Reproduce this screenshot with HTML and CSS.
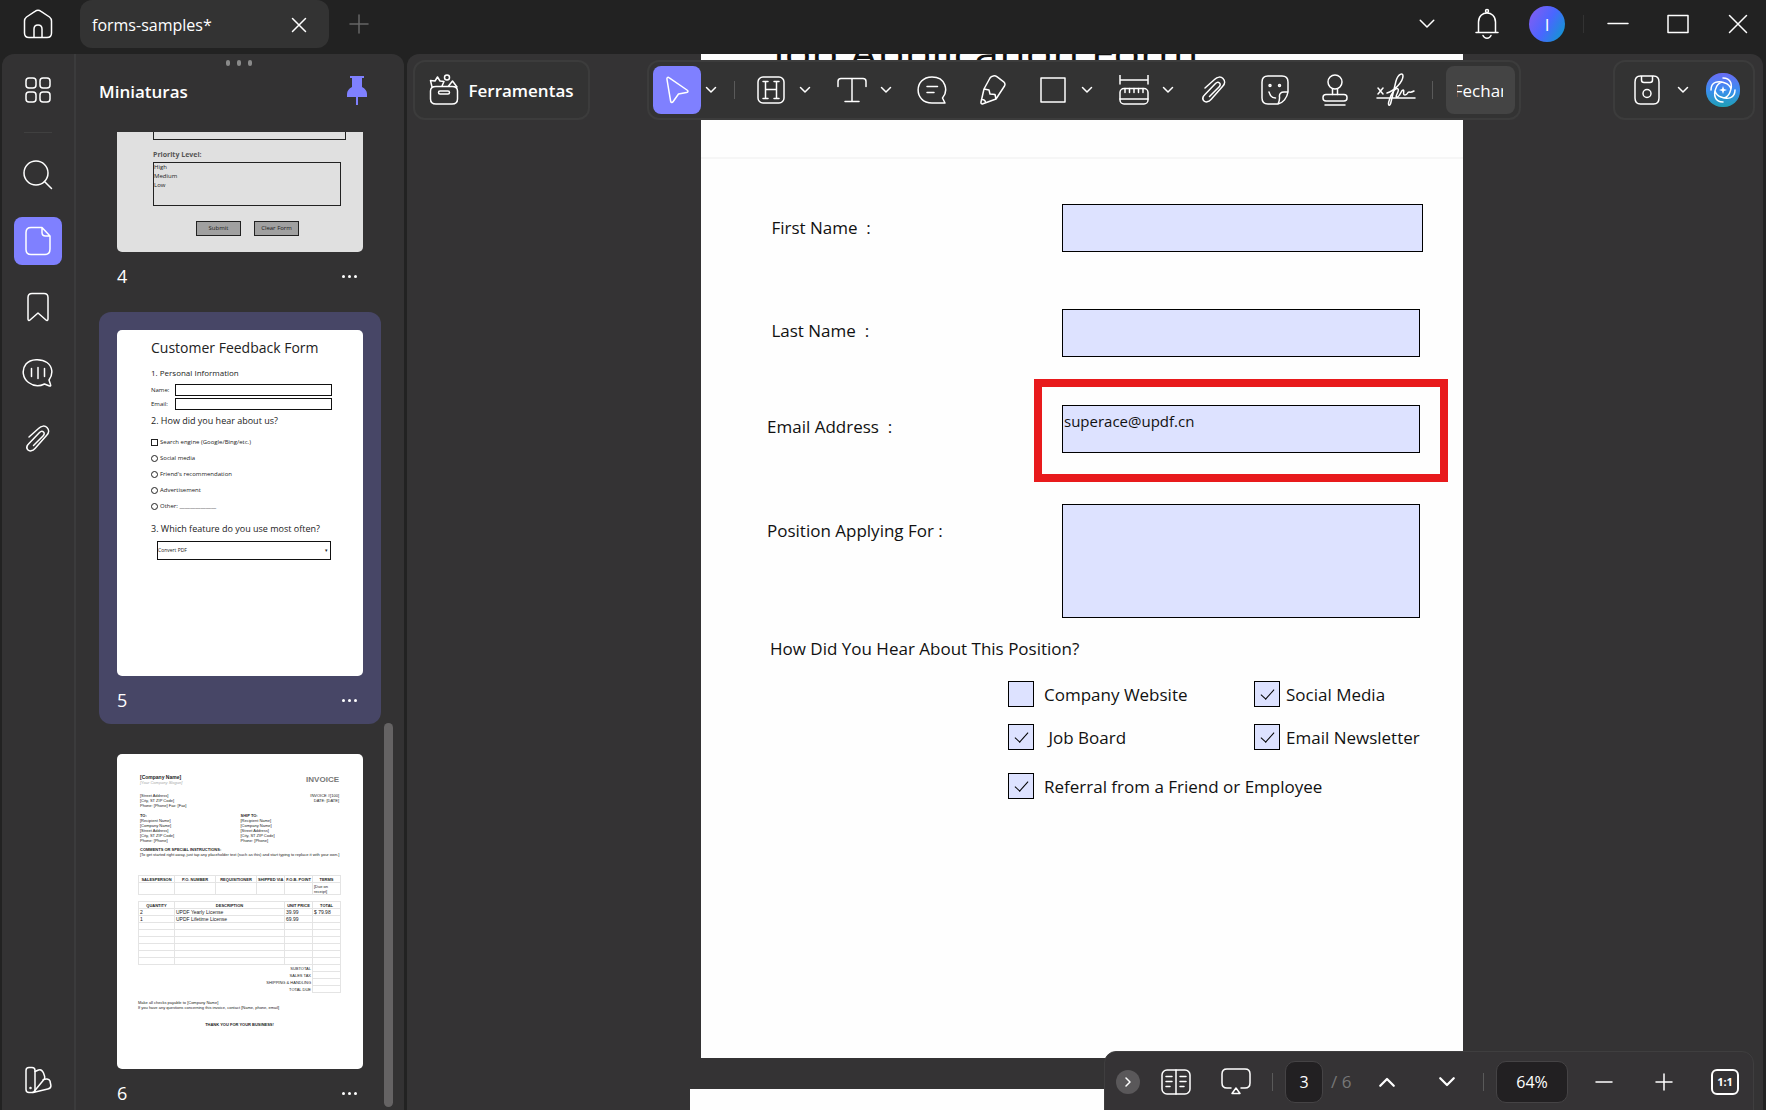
FILE: index.html
```html
<!DOCTYPE html>
<html lang="pt">
<head>
    <meta charset="UTF-8">
    <meta name="viewport" content="width=device-width, initial-scale=1.0">
    <title>forms-samples*</title>
    <link rel="stylesheet" href="styles.css">
</head>
<body>
    <!-- shared icons -->
    <svg class="sprite" aria-hidden="true">
        <symbol id="chevron" viewBox="0 0 12 8"><path d="M1.500 1.500 6 6l4.500-4.500"/></symbol>
        <symbol id="clip" viewBox="0 0 28 32"><path d="M5 13 14.500 4.500c3-3 6.500-3 8.500-1s2.500 5-.5 8L11 24.500c-2.500 2.800-5.500 3-7 1.500s-1.500-4 .5-6L15.500 8.500c1.500-1.500 3-1.500 4-.5s1 2.500-.5 4L9.500 21.500" transform="translate(0 1)"/></symbol>
    </svg>

    <!-- title bar -->
    <header class="titlebar">
        <button class="icon-btn home" aria-label="Home"><svg width="30" height="30" viewBox="0 0 30 30"><path d="M1.500 12c0-2 .8-3 2-4L12 2.300c2-1.500 4-1.500 6 0L26.500 8c1.200 1 2 2 2 4v12c0 3-1.500 4.500-4.500 4.500H6c-3 0-4.500-1.500-4.500-4.500zM11 28.500V20c0-5.500 8-5.500 8 0v8.500"/></svg></button>
        <div class="tab">
            <span>forms-samples*</span>
            <button class="icon-btn" aria-label="Fechar aba"><svg width="16" height="16" viewBox="0 0 16 16"><path d="m1.500 1.500 13 13m0-13-13 13"/></svg></button>
        </div>
        <button class="icon-btn new-tab" aria-label="Nova aba"><svg width="20" height="20" viewBox="0 0 20 20"><path d="M10 1v18M1 10h18"/></svg></button>
        <div class="window-tools">
            <button class="icon-btn" aria-label="Menu"><svg width="18" height="12"><use href="#chevron"/></svg></button>
            <button class="icon-btn" aria-label="Notificações"><svg width="24" height="32" viewBox="0 0 24 32"><circle cx="12" cy="3" r="1.500"/><path d="M3.500 24V14c0-12 17-12 17 0v10M1 24.500h22M8 27.500c1.500 3.500 6.500 3.500 8 0"/></svg></button>
            <button class="avatar">I</button>
            <span class="sep"></span>
            <button class="icon-btn" aria-label="Minimizar"><svg width="22" height="22" viewBox="0 0 22 22"><path d="M1 10.500h20"/></svg></button>
            <button class="icon-btn" aria-label="Maximizar"><svg width="22" height="20" viewBox="0 0 22 20"><path d="M1 1.500h20v17H1z"/></svg></button>
            <button class="icon-btn" aria-label="Fechar janela"><svg width="20" height="20" viewBox="0 0 20 20"><path d="m1.500 1.500 17 17m0-17-17 17"/></svg></button>
        </div>
    </header>

    <div class="workspace">
        <aside class="sidebar">
            <nav class="rail">
                <button class="icon-btn" aria-label="Grade"><svg width="26" height="26" viewBox="0 0 26 26"><rect x="1" y="1" width="10" height="10" rx="3"/><rect x="15" y="1" width="10" height="10" rx="3"/><rect x="1" y="15" width="10" height="10" rx="3"/><rect x="15" y="15" width="10" height="10" rx="3"/></svg></button>
                <span class="rail-sep"></span>
                <button class="icon-btn" aria-label="Pesquisar"><svg width="30" height="30" viewBox="0 0 30 30"><circle cx="13" cy="13" r="12"/><path d="m21.500 21.500 7 7"/></svg></button>
                <button class="icon-btn active" aria-label="Miniaturas"><svg width="26" height="30" viewBox="0 0 26 30"><path d="M6 1.500h11L25 10v13c0 4-1.500 5.500-5 5.500H6c-3.500 0-5-1.500-5-5V6.500c0-3.500 1.500-5 5-5zM17 2v4.500C17 9 18.500 10 20.500 10H25"/></svg></button>
                <button class="icon-btn" aria-label="Marcadores"><svg width="24" height="30" viewBox="0 0 24 30"><path d="M6 1.500h12c3 0 4 1.500 4 4V27c0 1.500-1 2-2 1l-8-7-8 7c-1 1-2 .5-2-1V5.500c0-2.500 1-4 4-4z"/></svg></button>
                <button class="icon-btn" aria-label="Comentários"><svg width="32" height="30" viewBox="0 0 32 30"><path d="M27 22C31.500 16 30.500 8.500 25 4.500S8.500.5 4 6 .5 20 6.500 24.500s12 3.500 16 1.500l5 2c1 .3 1.500-.5 1-1.500zM9.500 10.500v8M16 9.500v11M22.500 10.500v8"/></svg></button>
                <button class="icon-btn" aria-label="Anexos"><svg width="28" height="32"><use href="#clip"/></svg></button>
                <button class="icon-btn last" aria-label="Tema"><svg width="28" height="28" viewBox="0 0 28 28"><rect x="2" y="1.500" width="9" height="25" rx="3"/><path d="M11 5.500 14.500 4c2-.8 4 .5 5 3l1 3c.5 1.500 0 3-1 4L10.500 25M19 14c2.500-1.500 6-1.500 7 1l.8 4c.4 2-.8 3.500-3 4L9 26.500"/><circle cx="6.500" cy="22" r=".5"/></svg></button>
            </nav>

            <section class="thumbs">
                <div class="grip"><i></i><i></i><i></i></div>
                <div class="thumbs-head">
                    <h2>Miniaturas</h2>
                    <button class="icon-btn" aria-label="Fixar"><svg class="pin" width="20" height="30" viewBox="0 0 20 30"><path d="M3 0h14v2h-2v9c3 1.500 5 4 5 7v3h-9v8H9v-8H0v-3c0-3 2-5.500 5-7V2H3z"/></svg></button>
                </div>
                <div class="thumb-list">
                    <figure class="thumb cut">
                        <div class="sheet ticket">
                            <div class="ticket-box"></div>
                            <b>Priority Level:</b>
                            <div class="ticket-list">High<br>Medium<br>Low</div>
                            <div class="ticket-btns"><span>Submit</span><span>Clear Form</span></div>
                        </div>
                        <figcaption>4 <button class="more" aria-label="Mais opções"><i></i><i></i><i></i></button></figcaption>
                    </figure>

                    <figure class="thumb selected">
                        <div class="sheet feedback">
                            <h3>Customer Feedback Form</h3>
                            <h5>1. Personal Information</h5>
                            <p class="blank">Name: <span></span></p>
                            <p class="blank">Email: <span></span></p>
                            <h4>2. How did you hear about us?</h4>
                            <ul>
                                <li><i class="square"></i>Search engine (Google/Bing/etc.)</li>
                                <li><i></i>Social media</li>
                                <li><i></i>Friend's recommendation</li>
                                <li><i></i>Advertisement</li>
                                <li><i></i>Other: ______________</li>
                            </ul>
                            <h4>3. Which feature do you use most often?</h4>
                            <div class="feature"><span>Convert PDF</span><span>▾</span></div>
                        </div>
                        <figcaption>5 <button class="more" aria-label="Mais opções"><i></i><i></i><i></i></button></figcaption>
                    </figure>

                    <figure class="thumb">
                        <div class="sheet invoice">
                            <div class="inv-row">
                                <div><b class="company">[Company Name]</b><br><em>[Your Company Slogan]</em></div>
                                <strong>INVOICE</strong>
                            </div>
                            <div class="inv-row">
                                <div>[Street Address]<br>[City, ST ZIP Code]<br>Phone: [Phone] Fax: [Fax]</div>
                                <div class="right">INVOICE #[100]<br>DATE: [DATE]</div>
                            </div>
                            <div class="inv-ship">
                                <div><b>TO:</b><br>[Recipient Name]<br>[Company Name]<br>[Street Address]<br>[City, ST ZIP Code]<br>Phone: [Phone]</div>
                                <div><b>SHIP TO:</b><br>[Recipient Name]<br>[Company Name]<br>[Street Address]<br>[City, ST ZIP Code]<br>Phone: [Phone]</div>
                            </div>
                            <div class="inv-note"><b>COMMENTS OR SPECIAL INSTRUCTIONS:</b><br>[To get started right away, just tap any placeholder text (such as this) and start typing to replace it with your own.]</div>
                            <table class="sales">
                                <colgroup><col class="w36"><col class="w41"><col class="w41"><col class="w28"><col class="w28"><col class="w28"></colgroup>
                                <tr><th>SALESPERSON</th><th>P.O. NUMBER</th><th>REQUISITIONER</th><th>SHIPPED VIA</th><th>F.O.B. POINT</th><th>TERMS</th></tr>
                                <tr class="tall"><td></td><td></td><td></td><td></td><td></td><td>[Due on receipt]</td></tr>
                            </table>
                            <table>
                                <colgroup><col class="w36"><col><col class="w28"><col class="w28"></colgroup>
                                <tr><th>QUANTITY</th><th>DESCRIPTION</th><th>UNIT PRICE</th><th>TOTAL</th></tr>
                                <tr class="item"><td>2</td><td>UPDF Yearly License</td><td>39.99</td><td>$ 79.98</td></tr>
                                <tr class="item"><td>1</td><td>UPDF Lifetime License</td><td>69.99</td><td></td></tr>
                                <tr><td></td><td></td><td></td><td></td></tr>
                                <tr><td></td><td></td><td></td><td></td></tr>
                                <tr><td></td><td></td><td></td><td></td></tr>
                                <tr><td></td><td></td><td></td><td></td></tr>
                                <tr><td></td><td></td><td></td><td></td></tr>
                                <tr><td></td><td></td><td></td><td></td></tr>
                                <tr><td class="sum" colspan="3">SUBTOTAL</td><td></td></tr>
                                <tr><td class="sum" colspan="3">SALES TAX</td><td></td></tr>
                                <tr><td class="sum" colspan="3">SHIPPING &amp; HANDLING</td><td></td></tr>
                                <tr><td class="sum" colspan="3">TOTAL DUE</td><td></td></tr>
                            </table>
                            <div class="inv-foot">Make all checks payable to [Company Name]<br>If you have any questions concerning this invoice, contact [Name, phone, email]</div>
                            <b class="thanks">THANK YOU FOR YOUR BUSINESS!</b>
                        </div>
                        <figcaption>6 <button class="more" aria-label="Mais opções"><i></i><i></i><i></i></button></figcaption>
                    </figure>
                </div>
                <div class="scrollbar"></div>
            </section>
        </aside>

        <main class="viewer">
            <div class="document">
                <form class="page">
                    <h1>Job Application Form</h1>
                    <div class="form-body">
                        <div class="field first">
                            <label for="first">&nbsp;First Name&nbsp; :</label>
                            <input type="text" id="first">
                        </div>
                        <div class="field last-name">
                            <label for="last">&nbsp;Last Name&nbsp; :</label>
                            <input type="text" id="last">
                        </div>
                        <div class="field email">
                            <label for="email">Email Address&nbsp; :</label>
                            <input type="text" id="email" value="superace@updf.cn">
                            <span class="marker"></span>
                        </div>
                        <div class="field position">
                            <label for="position">Position Applying For :</label>
                            <textarea id="position"></textarea>
                        </div>
                        <p class="question">How Did You Hear About This Position?</p>
                        <div class="options">
                            <label><input type="checkbox">Company Website</label>
                            <label><input type="checkbox" checked>Social Media</label>
                            <label><input type="checkbox" checked>&nbsp;Job Board</label>
                            <label><input type="checkbox" checked>Email Newsletter</label>
                            <label class="wide"><input type="checkbox" checked>Referral from a Friend or Employee</label>
                        </div>
                    </div>
                </form>
                <div class="next-page"></div>
            </div>

            <!-- floating toolbars -->
            <div class="toolbars">
                <button class="bar tools-btn">
                    <svg width="30" height="32" viewBox="0 0 30 32"><path d="M7 12.500h16c3.500 0 5.500 1.500 5.500 4.500v8c0 3.500-2 5-5.500 5H7c-3.500 0-5.500-1.500-5.500-5v-8c0-3 2-4.500 5.500-4.500zM3 13 1.500 6.500l4.500.5L8.500 3l2.500 4 4 .5-2 4.500M19.500 12l4-5 4.500 6"/><circle cx="18" cy="3.500" r="2.500"/><rect x="9.500" y="17" width="11" height="3" rx="1.500"/></svg>
                    Ferramentas
                </button>
                <div class="bar tools">
                    <div class="tool">
                        <button class="icon-btn active" aria-label="Selecionar"><svg width="24" height="28" viewBox="0 0 24 28"><path d="M2 3.500c-.4-2 .8-2.800 2.300-1.700L22 14c1.500 1 1.200 2.300-.5 2.600l-8 1.400-5.300 7.500c-1 1.500-2.300 1.200-2.600-.5z"/></svg></button>
                        <button class="more-btn" aria-label="Mais"><svg width="12" height="8"><use href="#chevron"/></svg></button>
                    </div>
                    <span class="sep"></span>
                    <div class="tool">
                        <button class="icon-btn" aria-label="Realçar"><svg width="28" height="28" viewBox="0 0 28 28"><rect x="1" y="1" width="26" height="26" rx="5"/><path d="M8.500 6v16M19.500 6v16M8.500 13.500h11M6 5.500h5M17 5.500h5M6 22.500h5M17 22.500h5"/></svg></button>
                        <button class="more-btn" aria-label="Mais"><svg width="12" height="8"><use href="#chevron"/></svg></button>
                    </div>
                    <div class="tool">
                        <button class="icon-btn" aria-label="Texto"><svg width="30" height="26" viewBox="0 0 30 26"><path d="M1 9.500V4.500c0-2 1-3 3-3h22c2 0 3 1 3 3v5M15 1.500v23M8 24.500h14"/></svg></button>
                        <button class="more-btn" aria-label="Mais"><svg width="12" height="8"><use href="#chevron"/></svg></button>
                    </div>
                    <button class="icon-btn" aria-label="Nota"><svg width="30" height="28" viewBox="0 0 30 28"><path d="M28 27H15C-3.500 27-3.500 1 15 1c14 0 16.500 14 10.500 21zM10 10.500h10.500M10 16.500h7"/></svg></button>
                    <button class="icon-btn" aria-label="Lápis"><svg width="26" height="30" viewBox="0 0 26 30"><path d="m10 3-6 11L1 27c-.3 1.600.7 2.300 2 1.800L16 24l8.500-13c.8-1.500.5-3-.8-4.200l-6.500-5C15 .3 11.500.5 10 3zM4 14l5 1 1 4 5 .5 1 4.500M1.500 24.500c2-.5 4 1 4 3"/></svg></button>
                    <div class="tool">
                        <button class="icon-btn" aria-label="Forma"><svg width="26" height="26" viewBox="0 0 26 26"><path d="M1 1h24v24H1z"/></svg></button>
                        <button class="more-btn" aria-label="Mais"><svg width="12" height="8"><use href="#chevron"/></svg></button>
                    </div>
                    <div class="tool">
                        <button class="icon-btn" aria-label="Medir"><svg width="30" height="30" viewBox="0 0 30 30"><path d="M1 0v9M29 0v9M1 5h28M6 13.500v4M10.500 13.500v4M15 13.500v4M19.500 13.500v4M24 13.500v4M1 24h28"/><rect x="1" y="13.500" width="28" height="15.500" rx="4"/></svg></button>
                        <button class="more-btn" aria-label="Mais"><svg width="12" height="8"><use href="#chevron"/></svg></button>
                    </div>
                    <button class="icon-btn" aria-label="Anexo"><svg width="28" height="32"><use href="#clip"/></svg></button>
                    <button class="icon-btn" aria-label="Adesivo"><svg width="28" height="30" viewBox="0 0 28 30"><path d="M17 29H7c-4 0-6-2-6-6V7c0-4 2-6 6-6h14c4 0 6 2 6 6v10c-1 6-5 11-10 12zM27 17h-4c-3 0-5 1.500-4.500 5 .3 3-.5 5-1.500 7M8 17c1 3.500 3.500 6 6.500 6"/><circle cx="9" cy="10.500" r="1"/><circle cx="18.500" cy="10.500" r="1"/></svg></button>
                    <button class="icon-btn" aria-label="Carimbo"><svg width="26" height="32" viewBox="0 0 26 32"><circle cx="13" cy="8" r="7"/><path d="M10.500 15v5.500M15.500 15v5.500M3 31h20"/><rect x="1" y="20.500" width="24" height="6.500" rx="3"/></svg></button>
                    <button class="icon-btn" aria-label="Assinar"><svg width="40" height="34" viewBox="0 0 40 34"><path d="m2 15 5 6m0-6-5 6M1 25h38M11 20c7-2 16-11 16-17 0-4-5-2-7 5l-5 21c-1 5-3.500 4-2-1C15 20 20 14 22 16s-4 8-1 8 4-7 6-7-1 5 2 5 2-3 4-3 1 1 5-1"/></svg></button>
                    <span class="sep"></span>
                    <button class="close-btn"><span>Fechar</span></button>
                </div>
                <div class="bar file-tools">
                    <button class="icon-btn" aria-label="Salvar"><svg width="26" height="30" viewBox="0 0 26 30"><path d="M6.500 1h13C23.500 1 25 3 25 7v16c0 4-1.500 6-5.500 6h-13C2.500 29 1 27 1 23V7c0-4 1.500-6 5.500-6zM7.500 1v4c0 1.500.8 2.500 2.500 2.500h6c1.700 0 2.500-1 2.500-2.500V1"/><circle cx="13" cy="18.500" r="4"/></svg></button>
                    <button class="more-btn" aria-label="Mais"><svg width="12" height="8"><use href="#chevron"/></svg></button>
                    <button class="ai" aria-label="Assistente"><svg width="26" height="26" viewBox="0 0 26 26"><path d="M13 1c8 0 10 7 7 14-1 3-3 5-6 6M25 13c0 8-7 10-14 7-3-1-5-3-6-6M13 25c-8 0-10-7-7-14 1-3 3-5 6-6M1 13C1 5 8 3 15 6c3 1 5 3 6 6"/><path class="spark" d="m13 9 1 3 3 1-3 1-1 3-1-3-3-1 3-1z"/></svg></button>
                </div>
            </div>

            <div class="statusbar">
                <button class="round" aria-label="Recolher"><svg width="8" height="12" viewBox="0 0 8 12"><path d="m2 2 4 4-4 4"/></svg></button>
                <button class="icon-btn" aria-label="Visualização"><svg width="30" height="26" viewBox="0 0 30 26"><rect x="1" y="1" width="28" height="24" rx="5"/><path d="M15 1v24M5 7.500h6M5 12.500h6M5 17.500h4M19 7.500h6M19 12.500h6M19 17.500h4"/></svg></button>
                <button class="icon-btn" aria-label="Apresentação"><svg width="30" height="27" viewBox="0 0 30 27"><path d="M10 20H6c-3.500 0-5-1.500-5-5V6c0-3.500 1.500-5 5-5h18c3.500 0 5 1.500 5 5v9c0 3.500-1.500 5-5 5h-4M15 20l4 5.500h-8z"/></svg></button>
                <span class="sep"></span>
                <div class="page-no"><input type="text" value="3" aria-label="Página"><span>/ 6</span></div>
                <button class="icon-btn" aria-label="Página anterior"><svg class="up" width="18" height="12"><use href="#chevron"/></svg></button>
                <button class="icon-btn" aria-label="Próxima página"><svg width="18" height="12"><use href="#chevron"/></svg></button>
                <span class="sep"></span>
                <input class="zoom" type="text" value="64%" aria-label="Zoom">
                <button class="icon-btn" aria-label="Reduzir"><svg width="18" height="18" viewBox="0 0 18 18"><path d="M1 9h16"/></svg></button>
                <button class="icon-btn" aria-label="Ampliar"><svg width="18" height="18" viewBox="0 0 18 18"><path d="M1 9h16M9 1v16"/></svg></button>
                <button class="ratio">1:1</button>
            </div>
        </main>
    </div>
</body>
</html>
```
FILE: styles.css
```css
* {
    box-sizing: border-box;
}
body {
    margin: 0;
    height: 100vh;
    display: flex;
    flex-direction: column;
    overflow: hidden;
    background-color: #222222;
    color: #fff;
    font-family: "Open Sans", "Noto Sans", sans-serif;
    font-size: 17px;
}
h1, h2, h3, h4, h5, p, ul, figure {
    margin: 0;
    padding: 0;
}
button, input, textarea {
    font: inherit;
    color: inherit;
    padding: 0;
    border: none;
    background: none;
}
svg {
    fill: none;
    stroke: #fff;
    stroke-width: 1.5;
    stroke-linecap: round;
    stroke-linejoin: round;
    flex: none;
}
.sprite {
    position: absolute;
    width: 0;
    height: 0;
}
.icon-btn {
    display: flex;
    align-items: center;
    justify-content: center;
    width: 48px;
    height: 48px;
    border-radius: 8px;
    flex: none;
}
.active {
    background-color: #7f80ff;
}
.sep {
    width: 1px;
    height: 18px;
    background-color: #5a5a5a;
    flex: none;
}

/* title bar */
.titlebar {
    display: flex;
    height: 54px;
    padding: 0 4px 0 14px;
    flex: none;
}
.tab {
    display: flex;
    align-items: center;
    justify-content: space-between;
    width: 249px;
    height: 48px;
    margin-left: 18px;
    padding: 2px 6px 0 12px;
    border-radius: 12px;
    background-color: #333333;
    font-size: 16px;
}
.new-tab {
    margin-left: 6px;
}
.new-tab svg {
    stroke: #666;
}
.window-tools {
    display: flex;
    align-items: center;
    gap: 12px;
    height: 48px;
    margin-left: auto;
}
.window-tools .sep {
    margin: 0 -2px 0 6px;
    background-color: #333;
}
.window-tools svg use {
    stroke-width: 1;
}
.avatar {
    width: 36px;
    height: 36px;
    margin: 0 0 0 6px;
    border-radius: 50%;
    background: linear-gradient(120deg, #8a5cf0, #4a66ff 50%, #06a0c8);
}

/* left side */
.workspace {
    display: flex;
    flex: 1;
    min-height: 0;
    gap: 3px;
    padding: 0 3px 0 2px;
}
.sidebar {
    display: flex;
    width: 402px;
    flex: none;
    border-radius: 12px 12px 0 0;
    background-color: #333233;
}
.rail {
    display: flex;
    flex-direction: column;
    gap: 18px;
    width: 75px;
    padding: 12px 12px 6px;
    border-right: 2px solid #3b3b3c;
}
.rail-sep {
    width: 28px;
    height: 1px;
    margin-left: 10px;
    background-color: #404040;
}
.rail .last {
    margin-top: auto;
}
.thumbs {
    position: relative;
    display: flex;
    flex-direction: column;
    flex: 1;
    padding-top: 6px;
}
.grip {
    display: flex;
    justify-content: center;
    gap: 7px;
    padding-right: 3px;
}
.grip i {
    width: 4px;
    height: 6px;
    border-radius: 2px;
    background-color: #8a8a8a;
}
.thumbs-head {
    display: flex;
    align-items: center;
    justify-content: space-between;
    height: 50px;
    padding: 0 24px 0 23px;
    margin-bottom: 16px;
}
.thumbs-head h2 {
    font-size: 17px;
    font-weight: 600;
}
.pin {
    fill: #7f80ff;
    stroke: none;
}
.thumb-list {
    display: flex;
    flex-direction: column;
    gap: 12px;
    flex: 1;
    min-height: 0;
    padding: 0 24px 0 23px;
    overflow: hidden;
}
.thumb {
    padding: 18px 18px 0;
    border-radius: 12px;
    flex: none;
}
.thumb.cut {
    padding-top: 0;
}
.thumb.selected {
    background-color: #474666;
}
.thumb figcaption {
    display: flex;
    align-items: center;
    justify-content: space-between;
    height: 48px;
    font-size: 18px;
}
.more {
    display: flex;
    gap: 3px;
    margin-right: 6px;
}
.more i {
    width: 3px;
    height: 3px;
    border-radius: 50%;
    background-color: #fff;
}
.scrollbar {
    position: absolute;
    right: 12px;
    bottom: 3px;
    width: 9px;
    height: 384px;
    border-radius: 5px;
    background-color: #656364;
}

/* miniature pages */
.sheet {
    border-radius: 5px;
    background-color: #fff;
    color: #222;
    overflow: hidden;
}
.ticket {
    height: 120px;
    padding: 0 17px 0 36px;
    border-radius: 0 0 5px 5px;
    background-color: #e0e0e0;
    font-size: 6px;
    line-height: 9px;
}
.ticket b {
    display: block;
    margin: 10px 0 3px;
    font-size: 7px;
    color: #555;
}
.ticket-box {
    height: 8px;
    border: 1px solid #222;
    border-top: none;
}
.ticket-list {
    height: 44px;
    margin-right: 5px;
    border: 1px solid #222;
}
.ticket-btns {
    display: flex;
    justify-content: center;
    gap: 13px;
    margin: 15px 4px 0 0;
}
.ticket-btns span {
    width: 45px;
    border: 1px solid #222;
    background-color: #a0a0a0;
    line-height: 13px;
    text-align: center;
}
.feedback {
    height: 346px;
    padding: 8px 28px 0 34px;
    font-size: 6px;
}
.feedback h3 {
    font-size: 14px;
    font-weight: normal;
    line-height: 20px;
    white-space: nowrap;
}
.feedback h4 {
    margin-top: 3px;
    font-size: 9px;
    font-weight: normal;
    line-height: 14px;
    white-space: nowrap;
}
.feedback h5 {
    margin: 9px 0 4px;
    font-size: 8px;
    font-weight: normal;
    line-height: 12px;
}
.blank {
    display: flex;
    justify-content: space-between;
    align-items: center;
    height: 14px;
}
.blank span {
    width: 157px;
    height: 12px;
    margin-right: 3px;
    border: 1px solid #111;
}
.feedback ul {
    display: flex;
    flex-direction: column;
    gap: 4px;
    margin: 8px 0 10px;
    list-style: none;
    line-height: 12px;
}
.feedback li {
    display: flex;
    align-items: center;
    gap: 2px;
}
.feedback li i {
    width: 7px;
    height: 7px;
    border: 1px solid #222;
    border-radius: 50%;
}
.feedback li .square {
    border-radius: 0;
}
.feature {
    display: flex;
    justify-content: space-between;
    margin: 5px 4px 0 6px;
    padding: 0 2px 0 0;
    border: 1px solid #111;
    font-size: 5px;
    line-height: 17px;
}
.invoice {
    height: 315px;
    padding: 21px 22px 0 21px;
    font-family: "Liberation Sans", Arial, sans-serif;
    font-size: 4px;
    line-height: 5px;
}
.inv-row {
    display: flex;
    justify-content: space-between;
    height: 18px;
    padding: 0 2px;
}
.inv-row strong {
    font-size: 8px;
    line-height: 10px;
    color: #777;
}
.inv-row em {
    color: #aaa;
}
.company {
    font-size: 5px;
}
.right {
    text-align: right;
}
.inv-ship {
    display: grid;
    grid-template-columns: 1fr 1fr;
    margin: 2px 0 4px;
    padding-left: 2px;
}
.inv-note {
    padding-left: 2px;
    white-space: nowrap;
}
.invoice table {
    width: 100%;
    table-layout: fixed;
    border-collapse: collapse;
    margin-top: 6px;
}
.invoice .sales {
    margin-top: 18px;
}
.invoice th, .invoice td {
    height: 7px;
    padding: 0 1px;
    border: 1px solid #e4e4e4;
    line-height: 5px;
    white-space: nowrap;
}
.invoice th {
    font-size: 4px;
}
.invoice .tall td {
    height: 12px;
    white-space: normal;
}
.invoice .item td {
    font-size: 5px;
}
.invoice .sum {
    border: none;
    text-align: right;
}
.w36 {
    width: 36px;
}
.w41 {
    width: 41px;
}
.w28 {
    width: 28px;
}
.inv-foot {
    margin: 7px 0 12px;
    white-space: nowrap;
}
.thanks {
    display: block;
    text-align: center;
}

/* document */
.viewer {
    position: relative;
    flex: 1;
    min-width: 0;
    overflow: hidden;
    border-radius: 12px 12px 0 0;
    background-color: #343334;
}
.document {
    display: flex;
    flex-direction: column;
    align-items: center;
    gap: 31px;
    padding-right: 6px;
}
.page {
    width: 762px;
    height: 1054px;
    margin-top: -50px;
    background-color: #fefefe;
    color: #111;
    flex: none;
}
.page h1 {
    height: 155px;
    padding: 16px 0 0 72px;
    border-bottom: 2px solid #f6f6f6;
    font-size: 44px;
    font-weight: 500;
    line-height: 64px;
}
.form-body {
    padding: 45px 43px 0 66px;
}
.field {
    position: relative;
    display: grid;
    grid-template-columns: 295px 1fr;
    align-items: start;
}
.field label {
    padding-top: 10px;
    line-height: 24px;
}
.field input, .field textarea {
    display: block;
    width: 100%;
    height: 48px;
    border: 1px solid #000;
    background-color: #dde2ff;
    resize: none;
}
.field.first {
    margin-right: -3px;
}
.field.first label {
    padding-top: 12px;
}
.last-name {
    margin-top: 57px;
}
.email {
    margin-top: 48px;
}
.email input {
    padding: 0 0 17px 1px;
    font-size: 15px;
}
.marker {
    position: absolute;
    inset: -26px -28px -29px 267px;
    border: 8px solid #e81a1c;
    pointer-events: none;
}
.position {
    margin-top: 51px;
}
.position label {
    padding-top: 15px;
}
.position textarea {
    height: 114px;
}
.question {
    margin-top: 19px;
    padding-left: 3px;
    line-height: 24px;
}
.options {
    display: grid;
    grid-template-columns: 246px 1fr;
    gap: 17px 0;
    margin: 20px -20px 0 241px;
}
.options label {
    display: flex;
    align-items: center;
    gap: 10px;
    height: 26px;
    white-space: nowrap;
}
.options label:nth-child(even) {
    gap: 6px;
}
.options .wide {
    grid-column: span 2;
    margin-top: 6px;
}
.options input {
    appearance: none;
    display: grid;
    place-items: center;
    width: 26px;
    height: 26px;
    margin: 0;
    border: 1px solid #000;
    background-color: #dde2ff;
    flex: none;
}
.options input:checked::after {
    content: "";
    width: 6px;
    height: 12px;
    margin-bottom: 4px;
    border: solid #000;
    border-width: 0 1px 1px 0;
    transform: rotate(42deg);
}
.next-page {
    width: 784px;
    height: 100px;
    background-color: #fefefe;
    flex: none;
}

/* floating bars */
.toolbars {
    position: absolute;
    top: 6px;
    left: 6px;
    right: 8px;
    display: flex;
}
.bar {
    display: flex;
    align-items: center;
    height: 60px;
    border: 2px solid #3c3c3c;
    border-radius: 12px;
    background-color: #333333;
    flex: none;
}
.tools-btn {
    justify-content: center;
    gap: 9px;
    width: 177px;
    font-weight: 600;
}
.tools {
    justify-content: space-between;
    width: 874px;
    margin-left: 57px;
    padding: 0 4px;
}
.tool {
    display: flex;
}
.more-btn {
    display: flex;
    align-items: center;
    justify-content: center;
    width: 20px;
}
.close-btn {
    display: flex;
    align-items: center;
    justify-content: center;
    width: 69px;
    height: 48px;
    border-radius: 8px;
    background-color: #444;
}
.close-btn span {
    display: flex;
    justify-content: center;
    width: 46px;
    overflow: hidden;
}
.file-tools {
    gap: 2px;
    width: 142px;
    margin-left: auto;
    padding: 0 8px;
}
.file-tools .ai {
    display: grid;
    place-items: center;
    width: 34px;
    height: 34px;
    margin-left: 11px;
    border-radius: 16px;
    background: linear-gradient(#6a6cf5, #3b8df0 50%, #1f9fb5);
}
.ai .spark {
    fill: #fff;
    stroke: none;
}
.statusbar {
    position: absolute;
    right: 9px;
    bottom: -2px;
    display: flex;
    align-items: center;
    gap: 12px;
    width: 650px;
    height: 61px;
    padding: 0 14px 0 11px;
    border: 1px solid #3f3e3f;
    border-radius: 12px 12px 0 0;
    background-color: #353335;
}
.round {
    display: grid;
    place-items: center;
    width: 24px;
    height: 24px;
    border-radius: 50%;
    background-color: #5a585a;
}
.up {
    transform: scaleY(-1);
}
.page-no {
    display: flex;
    align-items: center;
    gap: 8px;
    width: 66px;
    color: #777;
    white-space: nowrap;
}
.page-no input, .zoom {
    width: 38px;
    height: 42px;
    border: 1px solid #454345;
    border-radius: 10px;
    background-color: #222022;
    color: #fff;
    font-size: 16px;
    text-align: center;
    flex: none;
}
.zoom {
    width: 72px;
}
.ratio {
    width: 28px;
    height: 26px;
    margin-left: auto;
    border: 2px solid #fff;
    border-radius: 6px;
    font-size: 11px;
    font-weight: bold;
    line-height: 20px;
}
```
